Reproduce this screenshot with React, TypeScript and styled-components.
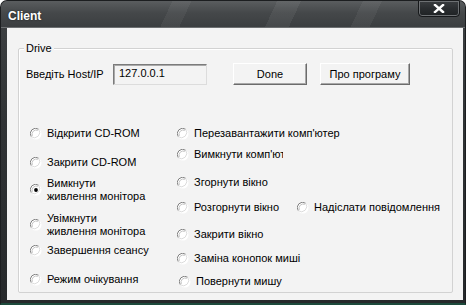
import React from "react";
import styled, { createGlobalStyle } from "styled-components";

const Global = createGlobalStyle`
  html, body { margin: 0; padding: 0; background: #ffffff; }
  body { font-family: "Liberation Sans", Arial, sans-serif; }
`;

const Window = styled.div`
  width: 466px;
  height: 305px;
  box-sizing: border-box;
  display: flex;
  flex-direction: column;
  border-radius: 7px 7px 0 0;
  background: linear-gradient(180deg, #3e4143 0%, #303335 40%, #26292b 100%);
  border: 1px solid #1c1e20;
  border-bottom: 2px solid #1d4a3c;
  overflow: hidden;
`;

const TitleBar = styled.div`
  height: 26px;
  flex: none;
  display: flex;
  justify-content: space-between;
  align-items: flex-start;
  background:
    linear-gradient(115deg, transparent 0 36%, rgba(255,255,255,0.05) 36% 40%, transparent 40% 58%, rgba(255,255,255,0.06) 58% 63%, transparent 63% 76%, rgba(255,255,255,0.05) 76% 80%, transparent 80%),
    linear-gradient(180deg, #5a5d5f 0%, #45484a 45%, #3b3e40 100%);
  border-bottom: 1px solid #6c6f71;
`;

const Title = styled.span`
  margin: 8px 0 0 7px;
  font-family: "Liberation Sans", Arial, sans-serif;
  font-weight: bold;
  font-size: 12px;
  line-height: 14px;
  color: #ffffff;
  text-shadow: 0 0 2px rgba(0,0,0,0.6);
`;

const CloseButton = styled.div`
  width: 42px;
  height: 17px;
  margin: -1px 5px 0 0;
  box-sizing: border-box;
  display: flex;
  align-items: center;
  justify-content: center;
  background: linear-gradient(180deg, #3a3d40 0%, #2a2d30 50%, #1f2224 100%);
  border: 1px solid #16181a;
  border-radius: 0 0 4px 4px;
  box-shadow: inset 0 0 0 1px #6d7073;
`;

const Client = styled.div`
  flex: 1;
  margin: 0 2px 3px 6px;
  background: #f3f3f3;
  padding: 20px 10px 7px 11px;
  display: flex;
  flex-direction: column;
`;

const Group = styled.div`
  flex: 1;
  position: relative;
  border: 1px solid #d2d2d2;
  box-shadow: inset 1px 1px 0 #ffffff;
  border-radius: 2px;
  padding: 14px 7px 0 7px;
  display: flex;
  flex-direction: column;
`;

const Legend = styled.span`
  position: absolute;
  top: -7px;
  left: 5px;
  padding: 0 2px;
  background: #f3f3f3;
  font-size: 11px;
  line-height: 13px;
  color: #000;
`;

const HostRow = styled.div`
  display: flex;
  align-items: center;
`;

const Label = styled.span`
  width: 87px;
  font-size: 11px;
  line-height: 13px;
  color: #000;
`;

const Input = styled.div`
  width: 94px;
  height: 21px;
  box-sizing: border-box;
  border: 1px solid;
  border-color: #7b7b7b #dcdcdc #dcdcdc #7b7b7b;
  box-shadow: inset 1px 1px 0 #a9a9a9;
  background: #f3f3f3;
  font-size: 11px;
  line-height: 13px;
  padding: 2px 0 0 5px;
  color: #000;
`;

const Button = styled.div<{ $offset: number; $width: number }>`
  margin-left: ${(p) => p.$offset}px;
  width: ${(p) => p.$width}px;
  height: 22px;
  box-sizing: border-box;
  display: flex;
  align-items: center;
  justify-content: center;
  background: #f3f3f3;
  border: 1px solid;
  border-color: #ffffff #6b6b6b #6b6b6b #ffffff;
  box-shadow: inset -1px -1px 0 #a8a8a8;
  font-size: 11px;
  color: #000;
`;

const Options = styled.div`
  margin: 42px 0 0 4px;
  display: grid;
  grid-template-columns: 147px 1fr;
  align-items: start;
`;

const Column = styled.div`
  display: flex;
  flex-direction: column;
`;

const OptionRow = styled.div<{ $gap: number }>`
  display: flex;
  margin-top: ${(p) => p.$gap}px;
`;

const Option = styled.label<{ $shift?: number; $width?: number }>`
  display: flex;
  align-items: center;
  gap: 5px;
  margin-left: ${(p) => p.$shift ?? 0}px;
  width: ${(p) => (p.$width ? `${p.$width}px` : "auto")};
  font-size: 11px;
  line-height: 13px;
  color: #000;
`;

const OptionText = styled.span<{ $clip?: number }>`
  white-space: pre-line;
  ${(p) => (p.$clip ? `width: ${p.$clip}px; overflow: hidden; white-space: nowrap;` : "")}
`;

const Radio = ({ checked }: { checked?: boolean }) => (
  <svg width="12" height="12" viewBox="0 0 12 12" style={{ flex: "none" }}>
    <circle cx="6" cy="6" r="5.5" fill="#ffffff" />
    <path d="M1.3 8.7 A5.3 5.3 0 0 1 8.7 1.3" fill="none" stroke="#808080" strokeWidth="1" />
    <path d="M8.7 1.3 A5.3 5.3 0 0 1 1.3 8.7" fill="none" stroke="#dcdcdc" strokeWidth="1" />
    <path d="M2.4 7.8 A4.1 4.1 0 0 1 7.8 2.4" fill="none" stroke="#c4c4c4" strokeWidth="1" />
    {checked && <circle cx="6" cy="6" r="1.9" fill="#000" />}
  </svg>
);

export default function App() {
  return (
    <>
      <Global />
      <Window>
        <TitleBar>
          <Title>Client</Title>
          <CloseButton>
            <svg width="12" height="9" viewBox="0 0 12 9">
              <path d="M2 1 L10 8 M10 1 L2 8" stroke="#ffffff" strokeWidth="2.4" strokeLinecap="square" />
            </svg>
          </CloseButton>
        </TitleBar>
        <Client>
          <Group>
            <Legend>Drive</Legend>
            <HostRow>
              <Label>Введіть Host/IP</Label>
              <Input>127.0.0.1</Input>
              <Button $offset={26} $width={74}>Done</Button>
              <Button $offset={13} $width={90}>Про програму</Button>
            </HostRow>
            <Options>
              <Column>
                <OptionRow $gap={0}>
                  <Option><Radio />Відкрити CD-ROM</Option>
                </OptionRow>
                <OptionRow $gap={16}>
                  <Option><Radio />Закрити CD-ROM</Option>
                </OptionRow>
                <OptionRow $gap={8}>
                  <Option><Radio checked /><OptionText>{"Вимкнути\nживлення монітора"}</OptionText></Option>
                </OptionRow>
                <OptionRow $gap={9}>
                  <Option><Radio /><OptionText>{"Увімкнути\nживлення монітора"}</OptionText></Option>
                </OptionRow>
                <OptionRow $gap={6}>
                  <Option><Radio />Завершення сеансу</Option>
                </OptionRow>
                <OptionRow $gap={16}>
                  <Option><Radio />Режим очікування</Option>
                </OptionRow>
              </Column>
              <Column>
                <OptionRow $gap={0}>
                  <Option><Radio />Перезавантажити комп'ютер</Option>
                </OptionRow>
                <OptionRow $gap={8}>
                  <Option><Radio /><OptionText $clip={89}>Вимкнути комп'ютер</OptionText></Option>
                </OptionRow>
                <OptionRow $gap={15}>
                  <Option><Radio />Згорнути вікно</Option>
                </OptionRow>
                <OptionRow $gap={12}>
                  <Option $width={120}><Radio />Розгорнути вікно</Option>
                  <Option><Radio />Надіслати повідомлення</Option>
                </OptionRow>
                <OptionRow $gap={14}>
                  <Option><Radio />Закрити вікно</Option>
                </OptionRow>
                <OptionRow $gap={11}>
                  <Option><Radio />Заміна конопок миші</Option>
                </OptionRow>
                <OptionRow $gap={10}>
                  <Option $shift={2}><Radio />Повернути мишу</Option>
                </OptionRow>
              </Column>
            </Options>
          </Group>
        </Client>
      </Window>
    </>
  );
}
